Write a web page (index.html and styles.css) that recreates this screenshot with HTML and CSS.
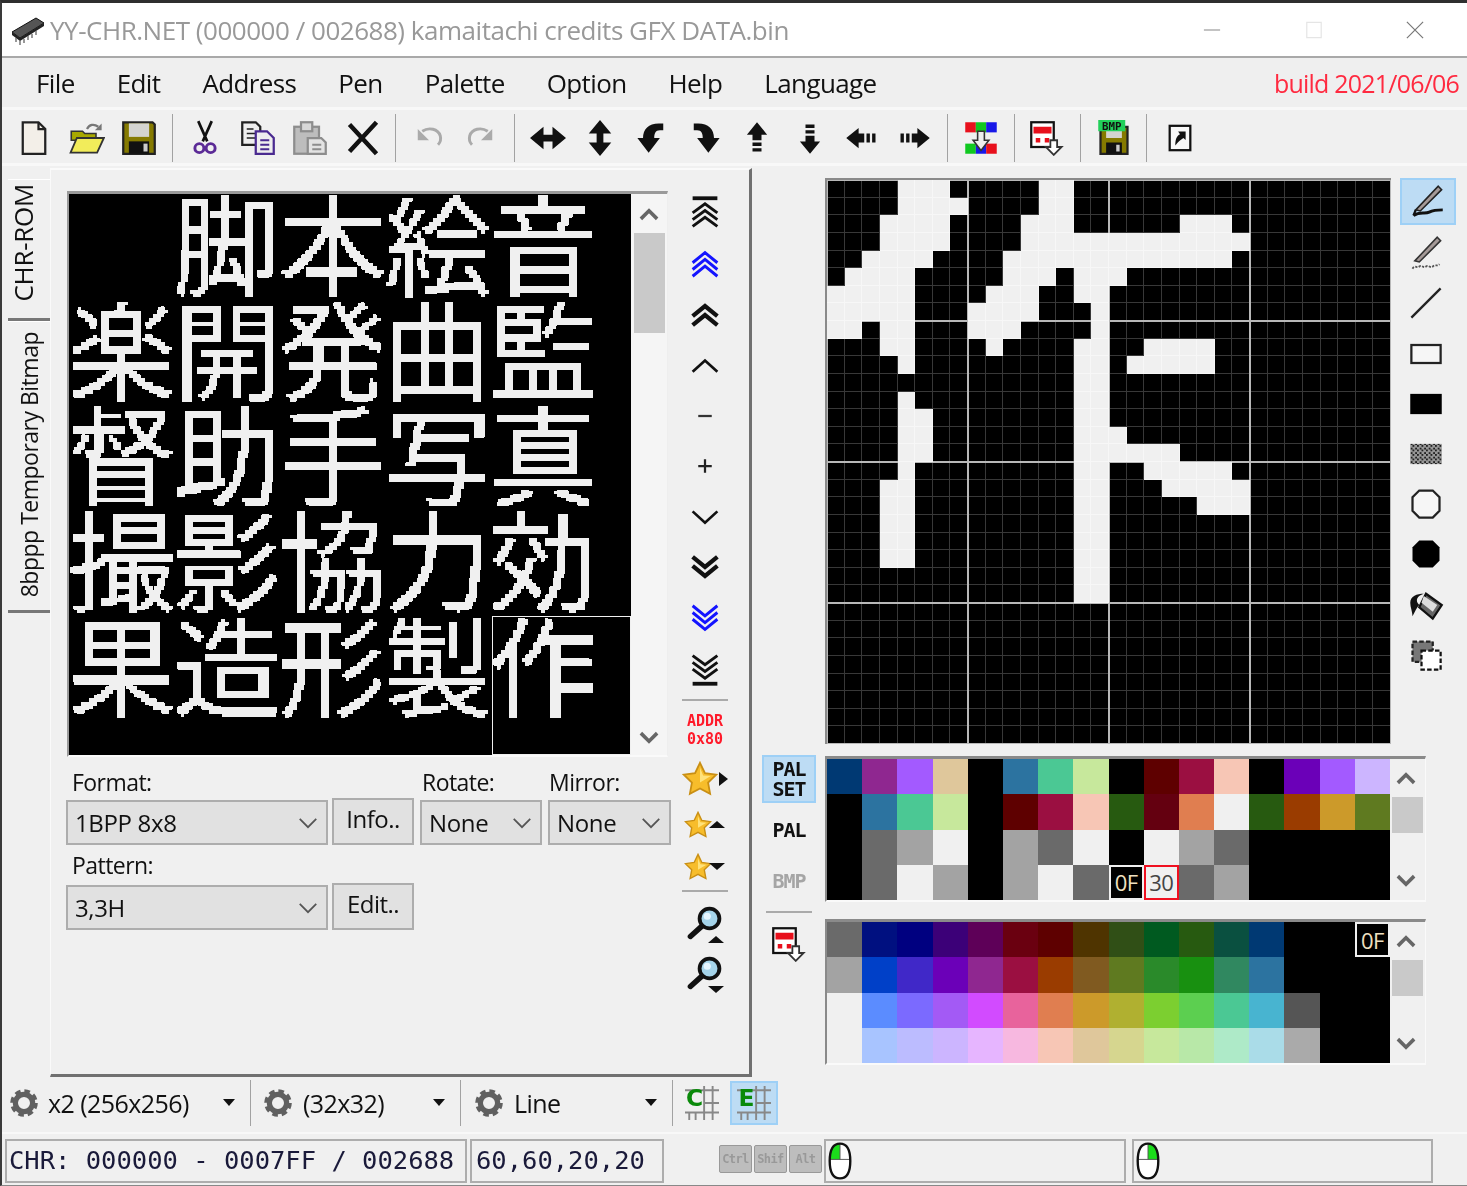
FILE: index.html
```html
<!DOCTYPE html>
<html lang="en">
<head>
<meta charset="utf-8">
<title>YY-CHR.NET</title>
<link rel="stylesheet" href="styles.css">
</head>
<body>
<svg class="defs" width="0" height="0" aria-hidden="true">
  <defs>
    <filter id="pix" x="0" y="0" width="100%" height="100%" color-interpolation-filters="sRGB">
      <feComponentTransfer in="SourceAlpha" result="hard">
        <feFuncA type="discrete" tableValues="0 0 1 1"/>
      </feComponentTransfer>
      <feFlood x="1" y="1" width="2" height="2" flood-color="#f0f0f0"/>
      <feComposite width="4" height="4"/>
      <feTile result="grid"/>
      <feComposite in="grid" in2="hard" operator="in"/>
      <feMorphology operator="dilate" radius="1"/>
    </filter>
    <pattern id="dith" width="2" height="2" patternUnits="userSpaceOnUse">
      <rect width="1" height="1" fill="#222"/><rect x="1" y="1" width="1" height="1" fill="#222"/><rect x="1" width="1" height="1" fill="#999"/><rect y="1" width="1" height="1" fill="#999"/>
    </pattern>
    <symbol id="star" viewBox="0 0 16 16"><path d="M8 .8l2.2 4.6 5 .7-3.6 3.5.9 5L8 12.2l-4.5 2.4.9-5L.8 6.1l5-.7z" fill="#f7bd2b" stroke="#c98f14" stroke-width=".8"/><path d="M8 3l1.4 3.4 3.4.3L8 9.5z" fill="#ffe27a"/></symbol>
    <symbol id="mag" viewBox="0 0 16 16"><circle cx="10" cy="6" r="4.4" fill="#a5d4ea" stroke="#111" stroke-width="1.7"/><path d="M6.500 9.500L1.500 14" stroke="#111" stroke-width="2.4" stroke-linecap="round"/><circle cx="9" cy="5" r="1.6" fill="#e6f6ff"/></symbol>
    <symbol id="gear" viewBox="0 0 16 16"><circle cx="8" cy="8" r="5.6" fill="none" stroke="#606060" stroke-width="2.6" stroke-dasharray="2.6 1.8"/><circle cx="8" cy="8" r="4.3" fill="none" stroke="#606060" stroke-width="2.6"/></symbol>
    <symbol id="vchev-u" viewBox="0 0 16 16"><path d="M3 11l5-5 5 5" fill="none" stroke="#666" stroke-width="2.2"/></symbol>
    <symbol id="vchev-d" viewBox="0 0 16 16"><path d="M3 5l5 5 5-5" fill="none" stroke="#666" stroke-width="2.2"/></symbol>
    <symbol id="gamepad" viewBox="0 0 16 16"><rect x="1" y="1" width="10" height="11" fill="#fff" stroke="#111"/><rect x="2" y="3" width="8" height="3" fill="#e8101c"/><rect x="3" y="8" width="2" height="2" fill="#e8101c"/><rect x="7" y="8" width="2" height="2" fill="#e8101c"/><path d="M9.500 9h3v3h2l-3.500 3.500L7.500 12h2z" fill="#fff" stroke="#333" stroke-width=".8"/></symbol>
    <symbol id="mouse" viewBox="0 0 16 24"><path d="M8 1C3.500 1 1.500 5 1.500 12S3.500 23 8 23s6.500-4 6.500-11S12.500 1 8 1z" fill="#fff"/></symbol>
  </defs>
</svg>

<div class="app">
  <header class="titlebar">
    <svg class="chip" viewBox="0 0 36 30"><path d="M2 17L26 3l8 5-24 15z" fill="#555" stroke="#111"/><path d="M2 17v3l8 6 24-15V8L10 23z" fill="#222"/><path d="M6 23v4M10 26v4M14 24v4M18 21v4M22 19v4M26 16v4" stroke="#777" stroke-width="1.500"/></svg>
    <span class="title">YY-CHR.NET (000000 / 002688) kamaitachi credits GFX DATA.bin</span>
    <div class="winbtns">
      <svg class="winbtn" viewBox="0 0 20 20"><path d="M1 10h18" stroke="#999" stroke-width="1.300"/></svg>
      <svg class="winbtn" viewBox="0 0 20 20"><rect x="2" y="1.500" width="16" height="17" fill="none" stroke="#e4e4e4" stroke-width="1.300"/></svg>
      <svg class="winbtn" viewBox="0 0 20 20"><path d="M1 1l18 18M19 1L1 19" stroke="#777" stroke-width="1.300"/></svg>
    </div>
  </header>

  <nav class="menubar">
    <span>File</span><span>Edit</span><span>Address</span><span>Pen</span><span>Palette</span><span>Option</span><span>Help</span><span>Language</span>
    <b class="build">build 2021/06/06</b>
  </nav>

  <div class="toolbar">
    <button class="tb"><svg viewBox="0 0 16 16"><path d="M3 1h7l3 3v11H3z" fill="#f3efe8" stroke="#222"/><path d="M10 1v3h3" fill="none" stroke="#222"/></svg></button>
    <button class="tb"><svg viewBox="0 0 16 16"><path d="M1 5h5l1 1h5v3H1z" fill="#a8a800" stroke="#333" stroke-width=".7"/><path d="M.7 14.500L3.500 8h12l-3 6.500z" fill="#f2ec5a" stroke="#333" stroke-width=".8"/><path d="M8 4c1-2 3-2.500 5-1" fill="none" stroke="#777"/><path d="M14.500 1.500v3h-3z" fill="#777"/></svg></button>
    <button class="tb"><svg viewBox="0 0 16 16"><path d="M1 1h13l1 1v13H1z" fill="#857a00" stroke="#222"/><rect x="3.500" y="1.500" width="9" height="6" fill="#d4d4d0"/><rect x="3.500" y="9.500" width="9" height="5.500" fill="#111"/><rect x="10" y="10.500" width="1.800" height="3.500" fill="#ccc"/></svg></button>
    <i class="sep"></i>
    <button class="tb"><svg viewBox="0 0 16 16"><path d="M5 .5l4 9M11 .5l-4 9" stroke="#111" stroke-width="1.200"/><circle cx="5.500" cy="12.500" r="2" fill="none" stroke="#5b2a96" stroke-width="1.300"/><circle cx="10.500" cy="12.500" r="2" fill="none" stroke="#5b2a96" stroke-width="1.300"/></svg></button>
    <button class="tb"><svg viewBox="0 0 16 16"><path d="M1 1h6l2 2v8H1z" fill="#eee" stroke="#222"/><path d="M3 4h3M3 6h4M3 8h4" stroke="#222" stroke-width=".7"/><path d="M7 5h5l3 3v7H7z" fill="#eee" stroke="#4a2a90"/><path d="M9 9h4M9 11h4M9 13h4" stroke="#4a2a90" stroke-width=".8"/></svg></button>
    <button class="tb"><svg viewBox="0 0 16 16"><rect x="1" y="3" width="11" height="12" fill="#bdbdbd" stroke="#8d8d8d"/><rect x="4" y="1" width="5" height="4" fill="#d8d8d8" stroke="#8d8d8d"/><path d="M7 8h6l2 2v5H7z" fill="#e3e3e3" stroke="#8d8d8d"/><path d="M9 11h4M9 13h4" stroke="#8d8d8d" stroke-width=".8"/></svg></button>
    <button class="tb"><svg viewBox="0 0 16 16"><path d="M2 2l12 13M14 1L2 14" stroke="#111" stroke-width="2"/></svg></button>
    <i class="sep"></i>
    <button class="tb"><svg viewBox="0 0 16 16"><path d="M3 4v5h5z" fill="#aaa"/><path d="M5 5c3-2 7-1 8 2 .4 1.500 0 3-1 4" fill="none" stroke="#aaa" stroke-width="1.300"/></svg></button>
    <button class="tb"><svg viewBox="0 0 16 16"><path d="M13 4v5H8z" fill="#aaa"/><path d="M11 5C8 3 4 4 3 7c-.4 1.500 0 3 1 4" fill="none" stroke="#aaa" stroke-width="1.300"/></svg></button>
    <i class="sep"></i>
    <button class="tb"><svg viewBox="0 0 16 16"><path d="M0 8l6-5v3.500h4V3l6 5-6 5V9.500H6V13z" fill="#111"/></svg></button>
    <button class="tb"><svg viewBox="0 0 16 16"><path d="M8 0l5 6H9.500v4H13l-5 6-5-6h3.500V6H3z" fill="#111"/></svg></button>
    <button class="tb"><svg viewBox="0 0 16 16"><path d="M13 1.500v3h-1.500C9.500 4.500 9 6 9 8h2.500L6.500 14.500 1.500 8H4c0-4 2.500-6.500 7-6.500z" fill="#111"/></svg></button>
    <button class="tb"><svg viewBox="0 0 16 16"><path d="M3 1.500v3h1.500C6.500 4.500 7 6 7 8H4.500l5 6.500 5-6.500H12c0-4-2.500-6.500-7-6.500z" fill="#111"/></svg></button>
    <button class="tb"><svg viewBox="0 0 16 16"><path d="M8 1l4.500 5.500H10V9H6V6.500H3.500zM6 10h4v1.500H6zM6 12.500h4V14H6z" fill="#111"/></svg></button>
    <button class="tb"><svg viewBox="0 0 16 16"><path d="M8 15l4.500-5.500H10V7H6v2.500H3.500zM6 6h4V4.500H6zM6 3.500h4V2H6z" fill="#111"/></svg></button>
    <button class="tb"><svg viewBox="0 0 16 16"><path d="M1 8l5.500-4.500V6H9v4H6.500v2.500zM10 6h1.500v4H10zM12.500 6H14v4h-1.500z" fill="#111"/></svg></button>
    <button class="tb"><svg viewBox="0 0 16 16"><path d="M15 8L9.500 3.500V6H7v4h2.500v2.500zM6 6H4.500v4H6zM3.500 6H2v4h1.500z" fill="#111"/></svg></button>
    <i class="sep"></i>
    <button class="tb"><svg viewBox="0 0 16 16"><rect x="1" y="1" width="4.700" height="4.500" fill="#e8101c"/><rect x="5.700" y="1" width="4.600" height="4.500" fill="#10c820"/><rect x="10.300" y="1" width="4.700" height="4.500" fill="#1818e8"/><rect x="1" y="10.500" width="4.700" height="4.500" fill="#10c820"/><rect x="5.700" y="10.500" width="4.600" height="4.500" fill="#1818e8"/><rect x="10.300" y="10.500" width="4.700" height="4.500" fill="#e8101c"/><path d="M6.500 5h3v4h2L8 13.500 4.500 9h2z" fill="#eee" stroke="#333" stroke-width=".7"/></svg></button>
    <i class="sep"></i>
    <button class="tb"><svg><use href="#gamepad"/></svg></button>
    <i class="sep"></i>
    <button class="tb"><svg viewBox="0 0 16 16"><path d="M2 3h12v12H2z" fill="#857a00" stroke="#222"/><rect x="4.500" y="3" width="7" height="5" fill="#d4d4d0"/><rect x="4.500" y="10" width="7" height="5" fill="#111"/><rect x="9" y="11" width="1.500" height="3" fill="#ccc"/><rect x="1" y="0" width="12" height="5" fill="#22d05a"/><text class="bmpfont" x="7" y="4.400">BMP</text></svg></button>
    <i class="sep"></i>
    <button class="tb tb-small"><svg viewBox="0 0 16 16"><rect x="2.500" y="1.500" width="11" height="13" fill="#f8f8f8" stroke="#111" stroke-width="1.200"/><path d="M5.500 12c0-3 .5-5 2.500-6L7 4.500h4V9L9.800 8c-1.500 1-2.800 2-4.300 4z" fill="#111"/></svg></button>
  </div>

  <main class="main">
    <div class="tabs">
      <div class="tab tab-on"><span>CHR-ROM</span></div>
      <div class="tab"><span>8bppp Temporary Bitmap</span></div>
    </div>

    <section class="panel">
      <div class="panel-left">
        <div class="bank">
          <div class="chr">
            <div class="chr-text" lang="ja">
              <div class="chr-row chr-row-first"><span>脚</span><span>本</span><span>絵</span><span>音</span></div>
              <div class="chr-row"><span>楽</span><span>開</span><span>発</span><span>曲</span><span>監</span></div>
              <div class="chr-row"><span>督</span><span>助</span><span>手</span><span>写</span><span>真</span></div>
              <div class="chr-row"><span>撮</span><span>影</span><span>協</span><span>力</span><span>効</span></div>
              <div class="chr-row"><span>果</span><span>造</span><span>形</span><span>製</span><span>作</span></div>
            </div>
            <div class="chr-sel"></div>
          </div>
          <div class="bank-scroll">
            <svg class="sb-arrow"><use href="#vchev-u"/></svg>
            <div class="sb-thumb"></div>
            <svg class="sb-arrow"><use href="#vchev-d"/></svg>
          </div>
        </div>

        <div class="form">
          <label class="lbl l-format">Format:</label>
          <label class="lbl l-rotate">Rotate:</label>
          <label class="lbl l-mirror">Mirror:</label>
          <div class="combo c-format"><span>1BPP 8x8</span><svg viewBox="0 0 16 16"><path d="M2 5l6 6 6-6" fill="none" stroke="#555" stroke-width="1.300"/></svg></div>
          <div class="btn b-info">Info..</div>
          <div class="combo c-rotate"><span>None</span><svg viewBox="0 0 16 16"><path d="M2 5l6 6 6-6" fill="none" stroke="#555" stroke-width="1.300"/></svg></div>
          <div class="combo c-mirror"><span>None</span><svg viewBox="0 0 16 16"><path d="M2 5l6 6 6-6" fill="none" stroke="#555" stroke-width="1.300"/></svg></div>
          <label class="lbl l-pattern">Pattern:</label>
          <div class="combo c-pattern"><span>3,3H</span><svg viewBox="0 0 16 16"><path d="M2 5l6 6 6-6" fill="none" stroke="#555" stroke-width="1.300"/></svg></div>
          <div class="btn b-edit">Edit..</div>
        </div>
      </div>

      <div class="nav">
        <button class="nv"><svg viewBox="0 0 16 16"><path d="M2.500 1h11" stroke="#111" stroke-width="1.700"/><path d="M2.500 7.500L8 3.500l5.500 4M2.500 10.500L8 6.500l5.500 4M2.500 13.500L8 9.500l5.500 4" fill="none" stroke="#111" stroke-width="1.300"/></svg></button>
        <button class="nv"><svg viewBox="0 0 16 16"><path d="M2.500 7L8 2.500 13.500 7M2.500 10L8 5.500l5.500 4.500M2.500 13L8 8.500l5.500 4.500" fill="none" stroke="#1414ff" stroke-width="1.300"/></svg></button>
        <button class="nv"><svg viewBox="0 0 16 16"><path d="M2.500 8.500L8 4l5.500 4.500M2.500 12.500L8 8l5.500 4.500" fill="none" stroke="#111" stroke-width="1.900"/></svg></button>
        <button class="nv"><svg viewBox="0 0 16 16"><path d="M2.500 11L8 6l5.500 5" fill="none" stroke="#111" stroke-width="1.200"/></svg></button>
        <button class="nv"><svg viewBox="0 0 16 16"><path d="M5 8h6" stroke="#333" stroke-width="1"/></svg></button>
        <button class="nv"><svg viewBox="0 0 16 16"><path d="M5 8h6M8 5v6" stroke="#222" stroke-width="1"/></svg></button>
        <button class="nv"><svg viewBox="0 0 16 16"><path d="M2.500 5.500L8 10.500l5.500-5" fill="none" stroke="#111" stroke-width="1.200"/></svg></button>
        <button class="nv"><svg viewBox="0 0 16 16"><path d="M2.500 3.500L8 8l5.500-4.500M2.500 7.500L8 12l5.500-4.500" fill="none" stroke="#111" stroke-width="1.900"/></svg></button>
        <button class="nv"><svg viewBox="0 0 16 16"><path d="M2.500 3L8 7.500 13.500 3M2.500 6L8 10.500 13.500 6M2.500 9L8 13.500 13.500 9" fill="none" stroke="#1414ff" stroke-width="1.300"/></svg></button>
        <button class="nv"><svg viewBox="0 0 16 16"><path d="M2.500 2.500l5.500 4 5.500-4M2.500 5.500l5.500 4 5.500-4M2.500 8.500l5.500 4 5.500-4" fill="none" stroke="#111" stroke-width="1.300"/><path d="M2.500 15h11" stroke="#111" stroke-width="1.700"/></svg></button>
        <i class="nav-sep"></i>
        <div class="addr">ADDR<br>0x80</div>
        <button class="nv star"><svg><use href="#star"/></svg><b class="tri tri-r"></b></button>
        <button class="nv star star-s"><svg><use href="#star"/></svg><b class="tri tri-u"></b></button>
        <button class="nv star star-s"><svg><use href="#star"/></svg><b class="tri tri-d"></b></button>
        <i class="nav-sep nav-sep-2"></i>
        <button class="nv mag"><svg><use href="#mag"/></svg><b class="tri tri-u"></b></button>
        <button class="nv mag"><svg><use href="#mag"/></svg><b class="tri tri-d"></b></button>
      </div>
    </section>

    <section class="right">
      <div class="edit-row">
        <div class="editor"><div class="cells" id="cells"></div></div>
        <div class="tools">
          <button class="tool tool-on"><svg viewBox="0 0 16 16"><path d="M13 1l1.500 1.500L5 12l-2-.5z" fill="#a59a98" stroke="#222" stroke-width=".7"/><path d="M2 14c3-2 5-.5 7-1.500 2-1 4-1 6-1" fill="none" stroke="#111" stroke-width="1.300"/><path d="M3 11.500L2 14" stroke="#111"/></svg></button>
          <button class="tool"><svg viewBox="0 0 16 16"><path d="M13 1l1.500 1.500L5 12l-2-.5z" fill="#a59a98" stroke="#333" stroke-width=".7"/><path d="M2 15c1-2 2 0 3-1s2 1 3 0 2 1 3 0 2 0 3-1" fill="none" stroke="#555" stroke-width=".8" stroke-dasharray="1 .6"/></svg></button>
          <button class="tool"><svg viewBox="0 0 16 16"><path d="M1.500 14.500l13-13" stroke="#222" stroke-width="1"/></svg></button>
          <button class="tool"><svg viewBox="0 0 16 16"><rect x="1.500" y="4" width="13" height="8" fill="#f6f6f6" stroke="#222"/></svg></button>
          <button class="tool"><svg viewBox="0 0 16 16"><rect x="1" y="3.500" width="14" height="9" fill="#000"/></svg></button>
          <button class="tool"><svg viewBox="0 0 16 16"><rect x="1" y="3.500" width="14" height="9" fill="url(#dith)"/></svg></button>
          <button class="tool"><svg viewBox="0 0 16 16"><path d="M5 2h6l3 3v6l-3 3H5l-3-3V5z" fill="#f6f6f6" stroke="#222"/></svg></button>
          <button class="tool"><svg viewBox="0 0 16 16"><path d="M5 2h6l3 3v6l-3 3H5l-3-3V5z" fill="#000"/></svg></button>
          <button class="tool"><svg viewBox="0 0 16 16"><path d="M8 3l7 5-4 6-6-5z" fill="#666" stroke="#111"/><path d="M7 4l6 4-2 3-5-4z" fill="#ddd"/><path d="M5 8C3 6 4 4 7 3 4 3 1 4 1 7c0 2 1 4 1 6 1-2 2-4 3-5z" fill="#111"/></svg></button>
          <button class="tool"><svg viewBox="0 0 16 16"><rect x="2" y="2" width="9" height="9" fill="#777" stroke="#222" stroke-dasharray="2 1"/><rect x="6" y="6" width="8.500" height="8.500" fill="#fff" stroke="#111" stroke-dasharray="2 1"/></svg></button>
        </div>
      </div>

      <div class="pal-row">
        <div class="pal-side">
          <div class="pal-btn pal-on">PAL<br>SET</div>
          <div class="pal-btn">PAL</div>
          <div class="pal-btn pal-off">BMP</div>
          <i class="pal-sep"></i>
          <button class="pal-ico"><svg><use href="#gamepad"/></svg></button>
        </div>
        <div class="pal-panes">
          <div class="pane pane-1">
            <div class="swatches" id="pal1"></div>
            <div class="pane-scroll"><svg class="sb-arrow"><use href="#vchev-u"/></svg><div class="sb-thumb"></div><svg class="sb-arrow"><use href="#vchev-d"/></svg></div>
          </div>
          <div class="pane pane-2">
            <div class="swatches" id="pal2"></div>
            <div class="pane-scroll"><svg class="sb-arrow"><use href="#vchev-u"/></svg><div class="sb-thumb"></div><svg class="sb-arrow"><use href="#vchev-d"/></svg></div>
          </div>
        </div>
      </div>
    </section>
  </main>

  <div class="bottombar">
    <div class="dd dd-1"><svg class="gear"><use href="#gear"/></svg><span class="dd-text">x2 (256x256)</span><b class="dd-arrow"></b></div>
    <i class="sep"></i>
    <div class="dd dd-2"><svg class="gear"><use href="#gear"/></svg><span class="dd-text">(32x32)</span><b class="dd-arrow"></b></div>
    <i class="sep"></i>
    <div class="dd dd-3"><svg class="gear"><use href="#gear"/></svg><span class="dd-text">Line</span><b class="dd-arrow"></b></div>
    <i class="sep"></i>
    <button class="gridbtn"><svg viewBox="0 0 16 16"><path d="M0 2h16M9 8h7M0 12.500h16M9 0v16M13 0v16M2 12.500V16M5 12.500V16" stroke="#888" stroke-width=".9" fill="none"/><text class="gridfont" x="4.500" y="9.500">C</text></svg></button>
    <button class="gridbtn gridbtn-on"><svg viewBox="0 0 16 16"><path d="M0 2h16M9 8h7M0 12.500h16M9 0v16M13 0v16M2 12.500V16M5 12.500V16" stroke="#888" stroke-width=".9" fill="none"/><text class="gridfont" x="4.500" y="9.500">E</text></svg></button>
  </div>

  <footer class="status">
    <div class="st st-1">CHR: 000000 - 0007FF / 002688</div>
    <div class="st st-2">60,60,20,20</div>
    <div class="keys"><span>Ctrl</span><span>Shif</span><span>Alt</span></div>
    <div class="st st-3"><svg class="mouse" viewBox="0 0 16 24"><use href="#mouse"/><path d="M8 1C3.500 1 1.500 5 1.500 11H8z" fill="#1bdc1b"/><path d="M1.500 11h13M8 1v10" stroke="#555" stroke-width=".6"/><path d="M8 1C3.500 1 1.500 5 1.500 12S3.500 23 8 23s6.500-4 6.500-11S12.500 1 8 1z" fill="none" stroke="#111" stroke-width="1.500"/></svg></div>
    <div class="st st-4"><svg class="mouse" viewBox="0 0 16 24"><use href="#mouse"/><path d="M8 1c4.500 0 6.500 4 6.500 10H8z" fill="#1bdc1b"/><path d="M1.500 11h13M8 1v10" stroke="#555" stroke-width=".6"/><path d="M8 1C3.500 1 1.500 5 1.500 12S3.500 23 8 23s6.500-4 6.500-11S12.500 1 8 1z" fill="none" stroke="#111" stroke-width="1.500"/></svg></div>
  </footer>
</div>
<script src="app.js"></script>
</body>
</html>
```

FILE: styles.css
```css
* { box-sizing: border-box; }
html, body { margin: 0; padding: 0; }
body { width: 1467px; height: 1186px; overflow: hidden; background: #f0f0f0; }
.defs { position: absolute; }
button { all: unset; box-sizing: border-box; display: flex; align-items: center; justify-content: center; }

.app {
  width: 1467px; height: 1186px; display: flex; flex-direction: column;
  border-top: 3px solid #2f2f2f; border-left: 2px solid #3a3a3a; border-bottom: 1px solid #888;
  background: #f0f0f0; color: #111; overflow: hidden;
  font-family: "Open Sans", "Noto Sans", "Liberation Sans", sans-serif;
  filter: blur(.6px);
}

.titlebar { height: 55px; flex: none; background: #fff; border-bottom: 2px solid #a9a9a9; display: flex; align-items: center; padding-left: 8px; }
.chip { width: 36px; height: 30px; flex: none; margin-right: 4px; }
.title { font-size: 26px; color: #999; letter-spacing: -.47px; white-space: nowrap; }
.winbtns { margin-left: auto; display: flex; gap: 83.500px; padding-right: 43px; }
.winbtn { width: 18px; height: 18px; display: block; }

.menubar { height: 49px; flex: none; display: flex; align-items: center; background: #efefef; padding-left: 34px; gap: 42px; font-size: 26px; letter-spacing: -.62px; white-space: nowrap; }
.build { margin-left: auto; padding-right: 8px; font-size: 25px; font-weight: 400; color: #ff2a40; letter-spacing: -.8px; }

.toolbar { height: 59px; flex: none; display: flex; align-items: center; padding: 2px 0 0 6px; border-top: 3px solid #f8f8f8; border-bottom: 3px solid #f8f8f8; }
.tb { width: 52.400px; height: 50px; flex: none; }
.tb svg { width: 36px; height: 36px; display: block; }
.tb-small svg { width: 30px; height: 30px; }
.sep { display: block; width: 1px; height: 48px; background: #a2a2a2; margin: 0 6.500px; flex: none; }
.bmpfont { font: 700 4.800px "DejaVu Sans Mono", monospace; text-anchor: middle; fill: #111; }

.main { height: 911px; flex: none; display: flex; }

.tabs { width: 48px; flex: none; padding-top: 13px; display: flex; flex-direction: column; align-items: flex-end; }
.tab { width: 42px; height: 292px; border-bottom: 3px solid #777; border-top: 1px solid #fff; display: flex; justify-content: center; align-items: center; font-size: 23px; letter-spacing: -.5px; padding-bottom: 2px; }
.tab:first-child { height: 142px; }
.tab-on { font-size: 26px; letter-spacing: -.3px; padding: 0 12px 12px 0; }
.tab span { writing-mode: vertical-rl; transform: rotate(180deg); white-space: nowrap; }

.panel { width: 702px; flex: none; margin-top: 2px; border-top: 2px solid #fafafa; border-left: 1px solid #fafafa; border-right: 3px solid #707070; border-bottom: 3px solid #707070; display: flex; padding: 21px 0 0 16px; }
.panel-left { width: 602px; flex: none; }

.bank { width: 601px; height: 566px; border: 1px solid #eee; border-top: 3px solid #9a9a9a; border-left: 2px solid #9a9a9a; border-bottom: 2px solid #fafafa; display: flex; }
.chr { width: 562px; height: 561px; background: #000; position: relative; flex: none; overflow: hidden; }
.chr-text { width: 562px; height: 561px; filter: url(#pix); color: #fff; font-family: "Noto Sans CJK JP", sans-serif; font-size: 108px; line-height: 92px; font-weight: 400; }
.chr-row { display: flex; height: 105.400px; }
.chr-row span { width: 105.400px; flex: none; text-align: center; display: flex; justify-content: center; }
.chr-row-first { padding-left: 105.400px; }
.chr-sel { position: absolute; left: 423px; top: 422px; width: 139px; height: 139px; border: 1px solid #f0f0f0; }

.bank-scroll, .pane-scroll { flex: 1; display: flex; flex-direction: column; align-items: center; background: #f5f5f5; }
.bank-scroll { padding: 7px 0 0; }
.sb-arrow { width: 26px; height: 26px; display: block; flex: none; }
.bank-scroll .sb-thumb { width: 31px; height: 100px; flex: none; margin: 6px 0 392px; background: #c9c9c9; }

.form { display: grid; grid-template-columns: 262px 82px 124px 125px; grid-template-rows: 43px 45px 38px 47px; column-gap: 4px; margin-left: -1px; }
.lbl { font-size: 23px; letter-spacing: -.55px; line-height: 1; padding-left: 6px; align-self: end; padding-bottom: 6px; white-space: nowrap; }
.l-format { grid-column: 1; grid-row: 1; }
.l-rotate { grid-column: 3; grid-row: 1; padding-left: 4px; }
.l-mirror { grid-column: 4; grid-row: 1; padding-left: 3px; }
.l-pattern { grid-column: 1; grid-row: 3; }
.combo { height: 45px; background: #e1e1e1; border: 2px solid #adadad; display: flex; align-items: center; justify-content: space-between; padding: 0 7px 0 7px; font-size: 24px; letter-spacing: -.35px; align-self: end; }
.combo svg { width: 22px; height: 22px; flex: none; }
.c-format { grid-column: 1; grid-row: 2; }
.c-rotate { grid-column: 3; grid-row: 2; width: 122px; justify-self: end; }
.c-mirror { grid-column: 4; grid-row: 2; width: 123px; justify-self: end; }
.c-pattern { grid-column: 1; grid-row: 4; }
.btn { background: #e1e1e1; border: 2px solid #adadad; display: flex; justify-content: center; align-items: center; font-size: 24px; letter-spacing: -.5px; padding-bottom: 6px; height: 47px; align-self: end; }
.b-info { grid-column: 2; grid-row: 2; }
.b-edit { grid-column: 2; grid-row: 4; }

.nav { width: 64px; margin-left: 4px; margin-top: -2px; display: flex; flex-direction: column; align-items: center; }
.nv { width: 46px; height: 50.400px; flex: none; position: relative; }
.nv > svg { width: 36px; height: 36px; display: block; }
.nav-sep { display: block; width: 46px; height: 2px; background: #aaa; margin: 6px 0 0; flex: none; }
.addr { height: 53px; flex: none; color: #ff1a2a; font: 700 15px/18px "DejaVu Sans Mono", monospace; text-align: center; padding-top: 11px; letter-spacing: 0; }
.star { height: 50px; justify-content: flex-start; }
.star > svg { width: 36px; height: 36px; }
.star-s { height: 42px; }
.star-s > svg { width: 28px; height: 28px; margin-left: 2px; }
.tri { display: block; width: 0; height: 0; border: 5px solid transparent; }
.tri-r { border-left: 9px solid #111; border-right: 0; border-top-width: 7px; border-bottom-width: 7px; margin-left: 1px; }
.tri-u { border-top: 0; border-bottom: 7px solid #111; border-left-width: 8px; border-right-width: 8px; margin-left: -3px; }
.tri-d { border-bottom: 0; border-top: 7px solid #111; border-left-width: 8px; border-right-width: 8px; margin-left: -3px; }
.nav-sep-2 { margin: 2px 0 6px; }
.mag { height: 50px; }
.mag > svg { width: 36px; height: 36px; }
.mag .tri { position: absolute; right: 4px; bottom: 5px; }

.right { flex: 1; padding: 12px 0 0 10px; display: flex; flex-direction: column; }
.edit-row { display: flex; padding-left: 63px; }
.editor { width: 566px; height: 566px; border-top: 2px solid #8a8a8a; border-left: 2px solid #8a8a8a; position: relative; flex: none; }
.editor::after { content: ""; position: absolute; inset: 0; pointer-events: none; mix-blend-mode: lighten;
  background-image: linear-gradient(#b8b8b8 2px, transparent 2px), linear-gradient(90deg, #b8b8b8 2px, transparent 2px);
  background-size: 141px 141px; background-position: -1px -1px; }
.cells { width: 564px; height: 564px; display: grid; grid-template: repeat(32, 1fr) / repeat(32, 1fr); background: #000; }
.cell { box-shadow: inset -1px -1px 0 #383838; }
.cell-on { background: #f0f0f0; box-shadow: inset -1px -1px 0 #f7f7f7; }

.tools { width: 56px; margin-left: 9px; display: flex; flex-direction: column; flex: none; }
.tool { height: 50.200px; flex: none; width: 56px; padding-right: 4px; }
.tool svg { width: 36px; height: 36px; display: block; }
.tool-on { height: 47px; margin-bottom: 3.200px; background: #bddcf4; border: 2px solid #9ed0f6; padding-right: 2px; }

.pal-row { display: flex; padding-top: 12px; }
.pal-side { width: 54px; margin-right: 9px; margin-top: -2px; flex: none; display: flex; flex-direction: column; align-items: center; padding-top: 1px; }
.pal-btn { width: 54px; height: 48px; flex: none; display: flex; align-items: center; justify-content: center; text-align: center; font: 700 20px/20px "DejaVu Sans Mono", monospace; letter-spacing: -1px; margin-bottom: 3px; }
.pal-on { background: #bddcf4; border: 2px solid #9ed0f6; }
.pal-off { color: #a5a5a5; }
.pal-sep { display: block; width: 46px; height: 2px; background: #aaa; margin: 3px 0 0; flex: none; }
.pal-ico { height: 62px; flex: none; }
.pal-ico svg { width: 36px; height: 36px; display: block; }
.pal-panes { display: flex; flex-direction: column; gap: 17px; }
.pane { width: 601px; height: 146px; display: flex; border: 1px solid #fafafa; border-top: 3px solid #8a8a8a; border-left: 2px solid #8a8a8a; border-bottom: 2px solid #fafafa; }
.swatches { width: 563px; height: 141px; display: grid; grid-template: repeat(4, 1fr) / repeat(16, 1fr); flex: none; }
.swatch { position: relative; }
.swatch-sel, .swatch-red { display: flex; align-items: center; justify-content: center; font: 400 22px/1 "Open Sans", sans-serif; letter-spacing: -.5px; border: 2px solid #f0f0f0; }
.swatch-sel { color: #f0e0c0; }
.swatch-red { color: #444; border-color: #f01020; }
.pane-scroll { padding-top: 6px; background: #f0f0f0; }
.pane-scroll .sb-arrow { margin-right: 4px; }
.pane-scroll .sb-thumb { width: 31px; height: 36px; flex: none; margin: 6px 0 35px; background: #c9c9c9; }

.bottombar { height: 55px; flex: none; display: flex; align-items: center; padding: 0 0 4px 6px; }
.bottombar .sep { margin: 0; height: 46px; }
.dd { display: flex; align-items: center; height: 46px; font-size: 25px; letter-spacing: -.55px; white-space: nowrap; }
.gear { width: 32px; height: 32px; flex: none; margin-right: 8px; }
.dd-text { flex: 1; }
.dd-arrow { display: block; width: 0; height: 0; border: 6px solid transparent; border-top: 7px solid #111; border-bottom: 0; margin-right: 15px; }
.dd-1 { width: 242px; }
.dd-2 { width: 209px; padding-left: 11px; }
.dd-2 .gear, .dd-3 .gear { margin-right: 9px; }
.dd-3 { width: 211px; padding-left: 12px; }
.gridbtn { width: 48px; height: 44px; flex: none; margin-left: 5px; }
.gridbtn svg { width: 34px; height: 34px; display: block; }
.gridbtn-on { background: #bddcf4; border: 2px solid #9ed0f6; margin-left: 4px; }
.gridfont { font: 700 11px "DejaVu Sans", sans-serif; fill: #0a8a0a; text-anchor: middle; }

.status { flex: 1; display: flex; align-items: flex-start; padding: 5px 0 0 3px; border-top: 2px solid #f8f8f8; }
.st { height: 44px; border: 2px solid #adadad; display: flex; align-items: center; font: 400 25.500px/1 "DejaVu Sans Mono", monospace; letter-spacing: 0; color: #1a1a3a; flex: none; white-space: nowrap; overflow: hidden; }
.st-1 { width: 462px; padding-left: 2px; }
.st-2 { width: 194px; margin-left: 3px; padding-left: 4px; }
.st-3 { width: 302px; }
.st-4 { width: 301px; margin-left: 6px; }
.keys { display: flex; gap: 2px; margin: 6px 2px 0 55px; flex: none; }
.keys span { width: 33px; height: 28px; background: #bdbdbd; border: 1px solid #999; border-radius: 2px; font: 700 12px/26px "DejaVu Sans Mono", monospace; letter-spacing: -.6px; color: #999; text-align: center; }
.mouse { width: 26px; height: 38px; margin-left: 1px; flex: none; display: block; }
```

FILE: app.js
```js
// Pixel editor: white runs per row [from, to] in the 32x32 cell grid.
var runs = [
  [[4,6],[12,13]], [[4,7],[12,13]], [[3,6],[11,13],[20,22]], [[3,6],[11,23]],
  [[2,5],[10,22]], [[1,4],[10,12],[14,16]], [[0,4],[9,11],[14,15]], [[0,4],[8,11],[15,15]],
  [[0,1],[3,4],[8,10],[15,15]], [[3,4],[9,9],[14,15],[18,21]], [[4,4],[14,15],[17,21]], [[14,15]],
  [[4,4],[14,15]], [[4,5],[14,15]], [[4,5],[14,16]], [[4,5],[14,19]],
  [[4,4],[14,15],[18,22]], [[3,4],[14,15],[19,23]], [[3,4],[14,15],[21,23]], [[3,4],[14,15]],
  [[3,4],[14,15]], [[3,4],[14,15]], [[14,15]], [[14,15]]
];
var cells = document.getElementById('cells');
for (var r = 0; r < 32; r++) {
  for (var c = 0; c < 32; c++) {
    var d = document.createElement('div');
    d.className = 'cell';
    (runs[r] || []).forEach(function (run) {
      if (c >= run[0] && c <= run[1]) d.className = 'cell cell-on';
    });
    cells.appendChild(d);
  }
}

var pal1 = [
  '003973','8f2790','a35aff','dfc79b','000000','2c73a0','4bc894','c7e89c','000000','5e0000','9b0f41','f7c6b5','000000','6b00b8','a35aff','ccb5ff',
  '000000','2c73a0','4bc894','c7e89c','000000','5e0000','9b0f41','f7c6b5','275a10','640010','e07e50','f0f0f0','275a10','9a3c00','cc9a2a','5f7a20',
  '000000','6a6a6a','a3a3a3','f0f0f0','000000','a3a3a3','6a6a6a','f0f0f0','000000','f0f0f0','a3a3a3','6a6a6a','000000','000000','000000','000000',
  '000000','6a6a6a','f0f0f0','a3a3a3','000000','a3a3a3','f0f0f0','6a6a6a','000000','f0f0f0','6a6a6a','a3a3a3','000000','000000','000000','000000'
];
var pal2 = [
  '6a6a6a','001080','000080','3c0078','5e0058','6a0010','5e0000','4f3400','304f16','005a20','275a10','0a5040','003973','000000','000000','000000',
  'a3a3a3','0040c8','4028c8','6b00b8','8f2790','9b0f41','9a3c00','805a20','5f7a20','2a8a2a','189010','308860','2c73a0','000000','000000','000000',
  'f0f0f0','5b8cff','7b6aff','a35af5','d24bff','e8639c','e07e50','cc9a2a','b0b030','7ccf30','5ccf50','4bc894','48b4d0','555555','000000','000000',
  'f0f0f0','a8c4ff','bcbcff','ccb5ff','e6b5ff','f7b8e0','f7c6b5','dfc79b','d6d68f','c7e89c','b8e8a8','aeeac8','aadce8','aaaaaa','000000','000000'
];
function fill(id, colors, marks) {
  var host = document.getElementById(id);
  colors.forEach(function (col, i) {
    var s = document.createElement('div');
    s.className = 'swatch';
    s.style.background = '#' + col;
    if (marks[i]) {
      s.className = 'swatch ' + marks[i][0];
      s.textContent = marks[i][1];
    }
    host.appendChild(s);
  });
}
fill('pal1', pal1, { 56: ['swatch-sel', '0F'], 57: ['swatch-red', '30'] });
fill('pal2', pal2, { 15: ['swatch-sel', '0F'] });
```
